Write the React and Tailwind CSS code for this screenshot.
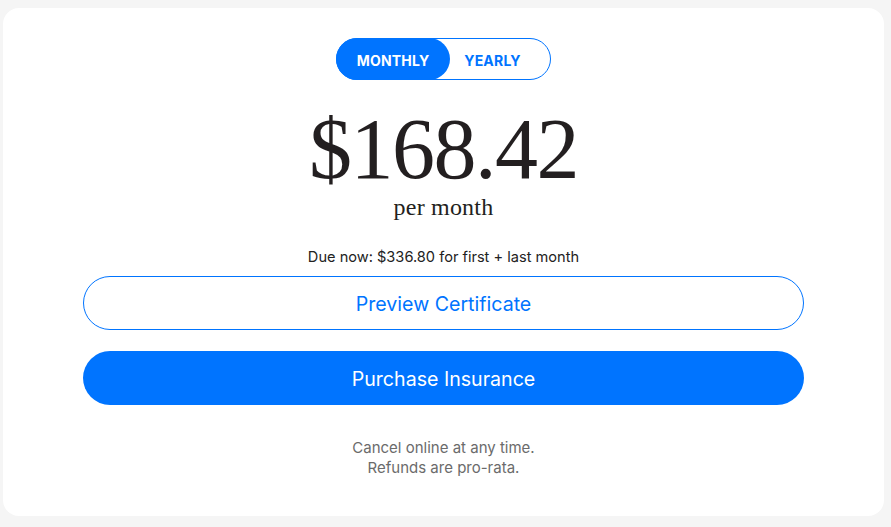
import React, { useState } from 'react';

const sans = { fontFamily: 'Inter, "Noto Sans", sans-serif' };

function App() {
    const [plan, setPlan] = useState('monthly');

    return (
        <div className="min-h-screen bg-[#f5f5f5] pt-2 pl-[3px] pr-[7px] pb-[11px]" style={sans}>
            <div className="bg-white rounded-2xl h-[508px] flex flex-col items-center pt-[30px]">
                {/* toggle */}
                <div className="flex h-[42px] w-[215px] rounded-full border border-[#0074ff]">
                    <button
                        onClick={() => setPlan('monthly')}
                        className={`w-[114px] -m-px h-[42px] pt-[2px] rounded-full text-[14px] font-bold tracking-[0.2px] ${plan === 'monthly' ? 'bg-[#0074ff] text-white' : 'text-[#0074ff]'}`}
                    >
                        MONTHLY
                    </button>
                    <button
                        onClick={() => setPlan('yearly')}
                        className={`flex-1 -m-px h-[42px] pt-[2px] rounded-full text-[14px] font-bold tracking-[0.2px] pr-[14px] ${plan === 'yearly' ? 'bg-[#0074ff] text-white' : 'text-[#0074ff]'}`}
                    >
                        YEARLY
                    </button>
                </div>

                {/* price */}
                <div
                    className="mt-[29px] text-[86px] leading-[80px] text-[#231f20] tracking-[-1.5px]"
                    style={{ fontFamily: '"Liberation Serif", serif' }}
                >
                    $168.42
                </div>
                <div
                    className="mt-[6px] text-[24px] leading-none text-[#231f20] tracking-[0.2px]"
                    style={{ fontFamily: '"Liberation Serif", serif' }}
                >
                    per month
                </div>

                <p className="mt-[28px] text-[14.6px] leading-5 text-[#222]">
                    Due now: $336.80 for first + last month
                </p>

                <div className="w-full px-[80px] flex flex-col">
                    <button className="mt-[9px] h-[54px] pt-[3px] w-full rounded-full border border-[#0074ff] text-[#0074ff] text-[19.6px]">
                        Preview Certificate
                    </button>
                    <button className="mt-[21px] h-[54px] pt-[3px] w-full rounded-full bg-[#0074ff] text-white text-[19.6px]">
                        Purchase Insurance
                    </button>
                </div>

                <div className="mt-[33px] text-[15px] leading-5 text-[#6b6b6b] text-center">
                    <p>Cancel online at any time.</p>
                    <p>Refunds are pro-rata.</p>
                </div>
            </div>
        </div>
    );
}

export default App;
